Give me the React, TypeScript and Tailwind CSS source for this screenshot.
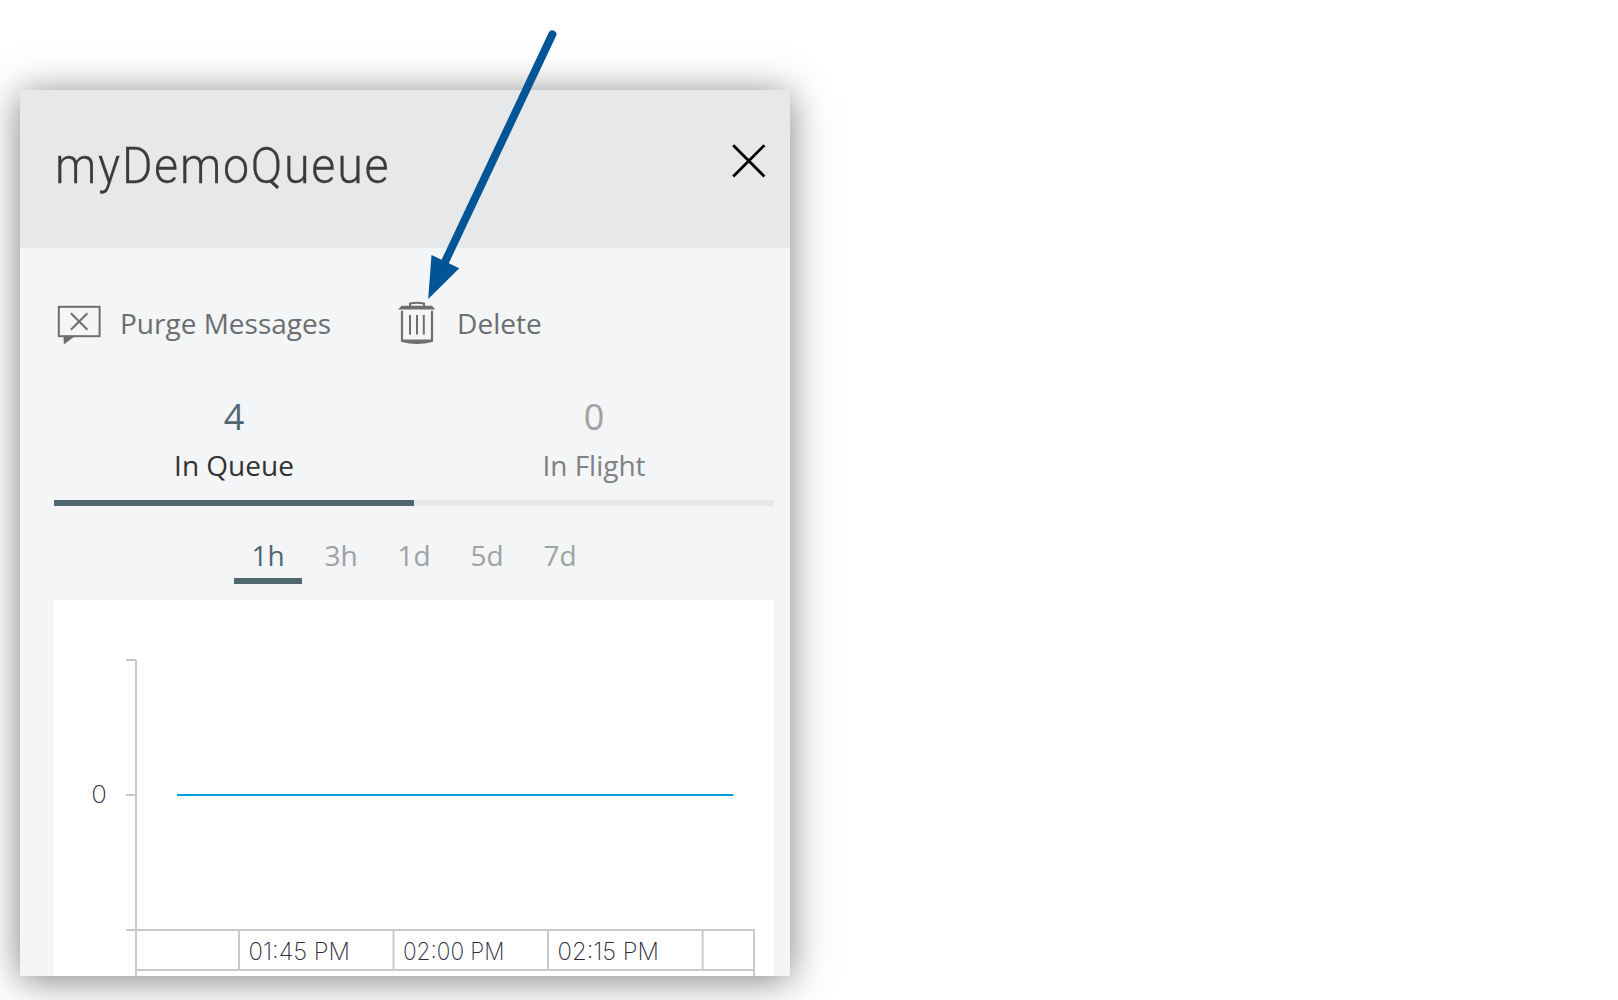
const AXIS = "#c8c9ca";

const ranges = ["1h", "3h", "1d", "5d", "7d"];

const ticks = [
  { x: 194.5, label: "01:45 PM" },
  { x: 349, label: "02:00 PM" },
  { x: 503.5, label: "02:15 PM" },
];

function CloseIcon() {
  return (
    <svg width="34" height="34" viewBox="0 0 34 34" fill="none" stroke="#000" strokeWidth="2.8">
      <path d="M1.2 1.2 32.4 32.4M32.4 1.2 1.2 32.4" />
    </svg>
  );
}

function PurgeIcon() {
  return (
    <svg width="44" height="40" viewBox="0 0 44 40" fill="none" stroke="#6d6e70" strokeWidth="2">
      <rect x="1.8" y="1.8" width="40.8" height="29.4" />
      <path d="M13.9 8.2 30.4 24.8M30.4 8.2 13.9 24.8" />
      <path d="M6.5 31h11.6L6.8 39.4z" fill="#6d6e70" stroke="none" />
    </svg>
  );
}

function TrashIcon() {
  return (
    <svg width="38" height="44" viewBox="0 0 38 44" fill="none" stroke="#6d6e70">
      <path d="M12 5V2.4Q19 1 26 2.4V5" strokeWidth="2" />
      <path d="M3.6 4.8h30.2l3.6 3.8H0z" fill="#6d6e70" stroke="none" />
      <path d="M4 9.8v30M34 9.8v30" strokeWidth="2.2" />
      <path d="M3 38.6h32v2.2Q19 45.2 3 40.8z" fill="#6d6e70" stroke="none" />
      <path d="M12 14v19.6M19 14v19.6M25.8 14v19.6" strokeWidth="2" />
    </svg>
  );
}

function QueueChart() {
  return (
    <svg className="block" width="720" height="376" viewBox="0 0 720 376" fill="none">
      <g stroke={AXIS} strokeWidth="2">
        <path d="M82 60V376M72 60H82M72 195H82M72 330H701M82 370H700M700 330V376" />
        <path d="M185 330V370M339.5 330V370M494 330V370M648.6 330V370" />
      </g>
      <path d="M123 195H679.5" stroke="#009fdf" strokeWidth="2" />
      <g fill="#2d2a3e" className="font-['Inter',sans-serif] text-[24px] font-extralight">
        <text x="37.3" y="202.5" textLength="15.6" lengthAdjust="spacingAndGlyphs">0</text>
        {ticks.map((t) => (
          <text key={t.label} x={t.x} y="360" textLength="101.5" lengthAdjust="spacingAndGlyphs">
            {t.label}
          </text>
        ))}
      </g>
    </svg>
  );
}

function Arrow() {
  return (
    <svg className="absolute left-[420px] top-[24px]" width="150" height="280" viewBox="420 24 150 280">
      <path d="M552.4 34.3 444 264" stroke="#005596" strokeWidth="8" strokeLinecap="round" />
      <path d="M428.2 299 431.5 255 459.3 268.3z" fill="#005596" />
    </svg>
  );
}

export default function App() {
  return (
    <div className="relative h-[1000px] w-full overflow-hidden bg-white pl-5 pt-[90px] font-['Open_Sans',sans-serif]">
      <section className="flex h-[886px] w-[770px] flex-col overflow-hidden bg-[#f3f5f7] shadow-[0_4px_36px_rgba(0,0,0,0.5)]">
        <header className="flex h-[158px] shrink-0 items-start justify-between bg-[#e7e8ea] pl-[35px] pr-[24px]">
          <h1 className="mt-[46px] origin-left scale-x-[0.93] whitespace-nowrap font-['Roboto',sans-serif] text-[50px] font-light leading-[60px] tracking-[1.9px] text-[#3a3b3d] [-webkit-text-stroke:0.3px_#3a3b3d]">
            myDemoQueue
          </h1>
          <button className="mt-[54px]">
            <CloseIcon />
          </button>
        </header>

        <div className="flex flex-col pl-[34px] pr-4">
          <div className="mt-[53px] flex h-[45px] text-[28px] leading-[44px] text-[#6d6e70]">
            <button className="flex items-start pl-[3px]">
              <span className="mt-1"><PurgeIcon /></span>
              <span className="ml-[19px]">Purge Messages</span>
            </button>
            <button className="ml-[67px] flex items-start">
              <TrashIcon />
              <span className="ml-[21px]">Delete</span>
            </button>
          </div>

          <div className="mt-[46px] grid grid-cols-2 text-center">
            <div className="h-[114px] border-b-6 border-[#51676f] pt-px">
              <div className="text-[36px] leading-[48px] text-[#51676f]">4</div>
              <div className="mt-1 text-[28px] leading-[40px] text-[#333]">In Queue</div>
            </div>
            <div className="h-[114px] border-b-6 border-[#e7e8ea] pt-px">
              <div className="text-[36px] leading-[48px] text-[#a0a1a3]">0</div>
              <div className="mt-1 text-[28px] leading-[40px] text-[#808183]">In Flight</div>
            </div>
          </div>

          <div className="mt-[29px] flex justify-center gap-[5px] text-center text-[28px] leading-[40px]">
            {ranges.map((r) => (
              <button
                key={r}
                className={
                  r === "1h"
                    ? "h-[49px] w-[68px] border-b-6 border-[#51676f] pb-[3px] text-[#51676f]"
                    : "h-[49px] w-[68px] border-b-6 border-transparent pb-[3px] text-[#a0a1a3]"
                }
              >
                {r}
              </button>
            ))}
          </div>

          <div className="mt-4 h-[376px] bg-white">
            <QueueChart />
          </div>
        </div>
      </section>
      <Arrow />
    </div>
  );
}
